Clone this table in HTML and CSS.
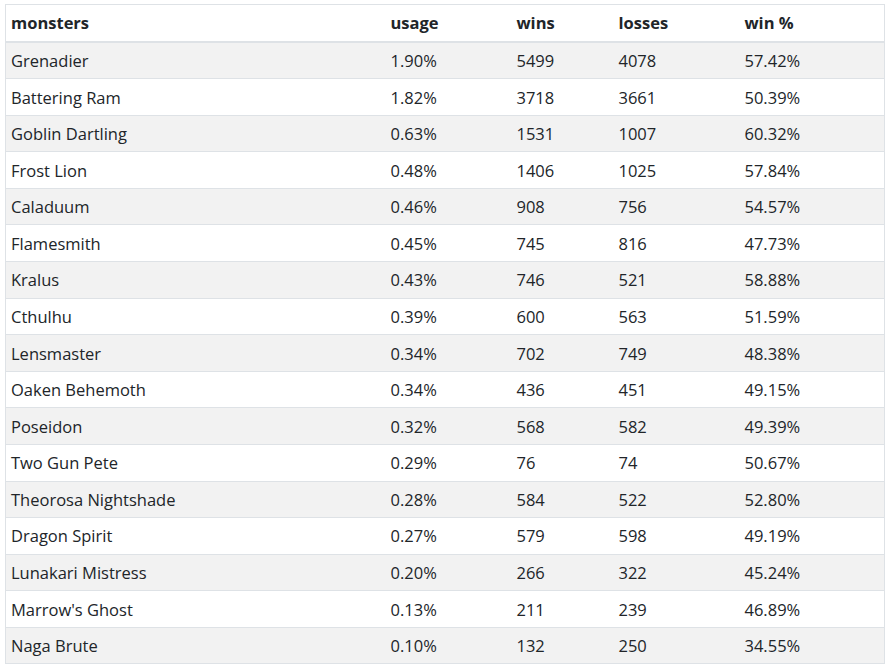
FILE: index.html
```html
<!DOCTYPE html>
<html lang="en">
<head>
<meta charset="utf-8">
<title>Monster stats</title>
<link rel="stylesheet" href="styles.css">
</head>
<body>
<table class="stats">
  <colgroup>
    <col class="c-name"><col class="c-usage"><col class="c-wins"><col class="c-losses"><col class="c-pct">
  </colgroup>
  <thead>
    <tr><th>monsters</th><th>usage</th><th>wins</th><th>losses</th><th>win %</th></tr>
  </thead>
  <tbody>
    <tr><td>Grenadier</td><td>1.90%</td><td>5499</td><td>4078</td><td>57.42%</td></tr>
    <tr><td>Battering Ram</td><td>1.82%</td><td>3718</td><td>3661</td><td>50.39%</td></tr>
    <tr><td>Goblin Dartling</td><td>0.63%</td><td>1531</td><td>1007</td><td>60.32%</td></tr>
    <tr><td>Frost Lion</td><td>0.48%</td><td>1406</td><td>1025</td><td>57.84%</td></tr>
    <tr><td>Caladuum</td><td>0.46%</td><td>908</td><td>756</td><td>54.57%</td></tr>
    <tr><td>Flamesmith</td><td>0.45%</td><td>745</td><td>816</td><td>47.73%</td></tr>
    <tr><td>Kralus</td><td>0.43%</td><td>746</td><td>521</td><td>58.88%</td></tr>
    <tr><td>Cthulhu</td><td>0.39%</td><td>600</td><td>563</td><td>51.59%</td></tr>
    <tr><td>Lensmaster</td><td>0.34%</td><td>702</td><td>749</td><td>48.38%</td></tr>
    <tr><td>Oaken Behemoth</td><td>0.34%</td><td>436</td><td>451</td><td>49.15%</td></tr>
    <tr><td>Poseidon</td><td>0.32%</td><td>568</td><td>582</td><td>49.39%</td></tr>
    <tr><td>Two Gun Pete</td><td>0.29%</td><td>76</td><td>74</td><td>50.67%</td></tr>
    <tr><td>Theorosa Nightshade</td><td>0.28%</td><td>584</td><td>522</td><td>52.80%</td></tr>
    <tr><td>Dragon Spirit</td><td>0.27%</td><td>579</td><td>598</td><td>49.19%</td></tr>
    <tr><td>Lunakari Mistress</td><td>0.20%</td><td>266</td><td>322</td><td>45.24%</td></tr>
    <tr><td>Marrow's Ghost</td><td>0.13%</td><td>211</td><td>239</td><td>46.89%</td></tr>
    <tr><td>Naga Brute</td><td>0.10%</td><td>132</td><td>250</td><td>34.55%</td></tr>
  </tbody>
</table>
</body>
</html>
```
FILE: styles.css
```css
html, body {
  margin: 0;
  padding: 0;
  background: #fff;
}
body {
  padding: 4px 5px 0 5px;
  font-family: "Open Sans", "Noto Sans", sans-serif;
  font-size: 16.5px;
  color: #212529;
}
.stats {
  width: 879px;
  border-collapse: collapse;
  table-layout: fixed;
  border: 1px solid #dee2e6;
}
.c-name { width: 380px; }
.c-usage { width: 126px; }
.c-wins { width: 102px; }
.c-losses { width: 126px; }
.c-pct { width: 145px; }
.stats th,
.stats td {
  text-align: left;
  padding: 6.4px 6px 5.2px 5px;
  line-height: 24px;
  border-top: 1px solid #dee2e6;
  white-space: nowrap;
}
.stats th {
  font-weight: 700;
  border-bottom: 2px solid #dee2e6;
}
.stats tbody tr:nth-child(odd) {
  background: #f2f2f2;
}
```
